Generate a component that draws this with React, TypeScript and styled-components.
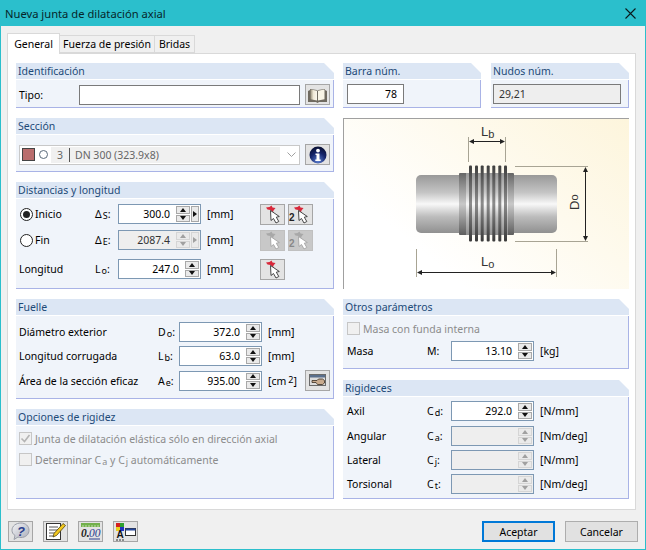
import React from "react";
import styled, { createGlobalStyle } from "styled-components";

const GlobalStyle = createGlobalStyle`
  html, body { margin: 0; padding: 0; background: #f0f0f0; }
  body { font-family: "Noto Sans", "Liberation Sans", sans-serif; font-size: 10.5px; color: #000; }
`;

//layout
const Dialog = styled.div`
  width: 646px;
  height: 550px;
  box-sizing: border-box;
  border: 1px solid #2bbfcc;
  border-top: none;
  background: #f0f0f0;
  overflow: hidden;
`;
const TitleBar = styled.div`
  height: 26px;
  margin: 0 -1px;
  padding: 0 10px 0 5px;
  display: flex;
  align-items: center;
  justify-content: space-between;
  background: #2bbfcc;
  font-size: 11.2px;
  color: #06262a;
`;
const Tabs = styled.div`
  display: flex;
  align-items: flex-end;
  height: 20px;
  padding: 7px 0 0 6px;
  position: relative;
  z-index: 1;
`;
const Tab = styled.div<{ $active?: boolean; $w: number }>`
  box-sizing: border-box;
  width: ${({ $w }) => $w}px;
  height: ${({ $active }) => ($active ? "21px" : "18px")};
  margin-bottom: ${({ $active }) => ($active ? "-1px" : "0")};
  margin-left: ${({ $active }) => ($active ? "0" : "-1px")};
  display: flex;
  align-items: center;
  justify-content: center;
  background: ${({ $active }) => ($active ? "#fff" : "#f0f0f0")};
  border: 1px solid #d9d9d9;
  border-bottom: ${({ $active }) => ($active ? "none" : "1px solid #d9d9d9")};
`;
const Panel = styled.div`
  box-sizing: border-box;
  height: 457px;
  margin: 0 9px 0 6px;
  padding: 9px 6px 0 8px;
  background: #fff;
  border: 1px solid #d9d9d9;
  display: grid;
  grid-template-columns: 318px 286px;
  column-gap: 9px;
`;
const Column = styled.div`
  display: flex;
  flex-direction: column;
  gap: 10px;
`;
const TwoGroups = styled.div`
  display: grid;
  grid-template-columns: 138px 138px;
  gap: 10px;
`;
const Footer = styled.div`
  display: flex;
  align-items: flex-start;
  padding: 11px 7px 0 7px;
`;
const IconGroup = styled.div`
  display: flex;
  gap: 10px;
  flex: 1;
`;
const ActionGroup = styled.div`
  display: flex;
  gap: 10px;
`;

//groups
const Group = styled.section<{ $h: number; $mt?: number }>`
  height: ${({ $h }) => $h}px;
  margin-top: ${({ $mt }) => $mt ?? 0}px;
  display: flex;
  flex-direction: column;
  box-sizing: border-box;
`;
const GroupTitle = styled.div`
  height: 16px;
  flex: none;
  padding-left: 2px;
  line-height: 16px;
  background: #dce6f4;
  color: #1c4a78;
  clip-path: polygon(0 0, calc(100% - 10px) 0, 100% 10px, 100% 100%, 0 100%);
  border-bottom: 1px solid #fff;
`;
const GroupBody = styled.div<{ $pt?: number; $pl?: number }>`
  flex: 1;
  min-height: 0;
  padding: ${({ $pt }) => $pt ?? 4}px 0 0 ${({ $pl }) => $pl ?? 3}px;
  background: #f0f4fa;
  border-right: 1px solid #a9b3e6;
  border-bottom: 1px solid #a9b3e6;
`;
const Row = styled.div<{ $cols: string; $mt?: number }>`
  display: grid;
  grid-template-columns: ${({ $cols }) => $cols};
  align-items: center;
  height: 20px;
  margin-top: ${({ $mt }) => $mt ?? 0}px;
`;
const Symbol = styled.span`
  white-space: nowrap;
`;
const Sub = styled.span`
  font-size: 9px;
  position: relative;
  top: 1px;
  margin-left: 1px;
`;
const Unit = styled.span`
  padding-left: 6px;
  white-space: nowrap;
`;
const Sup = styled.span`
  font-size: 9px;
  position: relative;
  top: -2px;
  margin-left: 2px;
`;

//inputs
const Field = styled.div<{ $disabled?: boolean; $plain?: boolean }>`
  box-sizing: border-box;
  height: 20px;
  display: flex;
  align-items: center;
  justify-content: flex-end;
  padding: 1px;
  border: 1px solid ${({ $plain }) => ($plain ? "#7a7a7a" : "#7d98b3")};
  background: ${({ $disabled }) => ($disabled ? "#eeeeee" : "#fff")};
  color: ${({ $disabled }) => ($disabled ? "#333" : "#000")};
`;
const FieldValue = styled.span<{ $left?: boolean; $pr?: number }>`
  flex: 1;
  padding: ${({ $left, $pr }) => ($left ? "0 0 0 4px" : `0 ${$pr ?? 5}px 0 0`)};
  text-align: ${({ $left }) => ($left ? "left" : "right")};
`;
const Spin = styled.div`
  width: 14px;
  height: 16px;
  margin-left: 1px;
  display: flex;
  flex-direction: column;
  gap: 1px;
`;
const SpinButton = styled.div<{ $dir: "up" | "down"; $off?: boolean }>`
  flex: 1;
  display: flex;
  align-items: center;
  justify-content: center;
  background: #eaeaea;
  border: 1px solid ${({ $off }) => ($off ? "#d5d5d5" : "#a8a8a8")};
  &::after {
    content: "";
    border-left: 3px solid transparent;
    border-right: 3px solid transparent;
    ${({ $dir, $off }) =>
      $dir === "up"
        ? `border-bottom: 4px solid ${$off ? "#a0a0a0" : "#111"};`
        : `border-top: 4px solid ${$off ? "#a0a0a0" : "#111"};`}
  }
`;
const StepButton = styled.div<{ $off?: boolean }>`
  width: 8px;
  height: 16px;
  margin-left: 1px;
  display: flex;
  align-items: center;
  justify-content: center;
  background: #eaeaea;
  border: 1px solid ${({ $off }) => ($off ? "#d5d5d5" : "#a8a8a8")};
  box-sizing: border-box;
  &::after {
    content: "";
    border-top: 3px solid transparent;
    border-bottom: 3px solid transparent;
    border-left: 4px solid ${({ $off }) => ($off ? "#a0a0a0" : "#111")};
  }
`;
const IconButton = styled.div<{ $off?: boolean }>`
  box-sizing: border-box;
  width: 25px;
  height: 21px;
  display: flex;
  align-items: center;
  justify-content: center;
  background: ${({ $off }) => ($off ? "#c8c8c8" : "#e3e3e3")};
  border: 1px solid ${({ $off }) => ($off ? "#c0c0c0" : "#a6a6a6")};
`;
const PickGroup = styled.div`
  display: flex;
  gap: 3px;
  align-self: start;
  margin-top: 1px;
`;
const Combo = styled.div`
  box-sizing: border-box;
  height: 20px;
  display: flex;
  align-items: center;
  padding: 0 0 0 2px;
  background: #fff;
  border: 1px solid #c8c8c8;
`;
const Swatch = styled.span`
  box-sizing: border-box;
  width: 13px;
  height: 13px;
  background: #b96d6d;
  border: 1px solid #444;
`;
const CircleMark = styled.span`
  box-sizing: border-box;
  width: 9px;
  height: 9px;
  margin: 0 3px 0 4px;
  border: 1px solid #5a6a7a;
  border-radius: 50%;
`;
const ComboText = styled.div`
  width: 229px;
  height: 16px;
  display: flex;
  align-items: center;
  background: #f0f0f0;
  color: #666;
`;
const ComboIndex = styled.span`
  width: 18px;
  text-align: center;
  border-right: 1px solid #555;
  margin-right: 5px;
`;
const Chevron = styled.span`
  margin-left: 7px;
  display: flex;
`;
const Radio = styled.span<{ $checked?: boolean }>`
  box-sizing: border-box;
  width: 13px;
  height: 13px;
  margin: 0 2px 0 1px;
  display: inline-flex;
  align-items: center;
  justify-content: center;
  flex: none;
  background: #fff;
  border: 1px solid #222;
  border-radius: 50%;
  &::after {
    content: "";
    display: ${({ $checked }) => ($checked ? "block" : "none")};
    width: 7px;
    height: 7px;
    border-radius: 50%;
    background: #222;
  }
`;
const RadioLabel = styled.label`
  display: flex;
  align-items: center;
`;
const CheckRow = styled.div<{ $mt?: number }>`
  display: flex;
  align-items: center;
  gap: 3px;
  height: 13px;
  margin-top: ${({ $mt }) => $mt ?? 0}px;
  color: #8c8c8c;
`;
const CheckBox = styled.span`
  box-sizing: border-box;
  width: 13px;
  height: 13px;
  flex: none;
  display: flex;
  background: #f0f0f0;
  border: 1px solid #c6c6c6;
`;
const Illustration = styled.div`
  height: 171px;
  box-sizing: border-box;
  border-top: 1px solid #a0a0a0;
  border-left: 1px solid #a0a0a0;
  background: linear-gradient(40deg, #ffffff 25%, #fdf5dc 100%);
`;
const DialogButton = styled.button<{ $primary?: boolean }>`
  box-sizing: border-box;
  width: 73px;
  height: 21px;
  padding: 0;
  font: inherit;
  color: #000;
  background: #e1e1e1;
  border: ${({ $primary }) => ($primary ? "2px solid #0078d7" : "1px solid #adadad")};
`;

//icons
const PickIcon = ({ two, off }: { two?: boolean; off?: boolean }) => (
  <svg width="23" height="19" viewBox="0 0 23 19">
    {two && (
      <text x="0" y="16" fontSize="10" fontWeight="700" fontFamily="Liberation Sans" fill={off ? "#888" : "#222"}>
        2
      </text>
    )}
    <path d="M5 2.500l3.500-.5 2-1.500 1 2 3 .5-2 2.500-.5 2-2.500-2.500-3-.5z" fill={off ? "#a8a8a8" : "#d8283a"} />
    <path d="M9.500 5.500l.5 10 2.500-2 2.500 4.500 2.800-1.500-2.500-4.300 3-.7z" fill="#fff" stroke={off ? "#a4a4a4" : "#333"} strokeWidth=".9" strokeLinejoin="round" />
  </svg>
);
const BookIcon = () => (
  <svg width="21" height="16" viewBox="0 0 21 16">
    <defs>
      <linearGradient id="page" x1="0" y1="0" x2="1" y2="0">
        <stop offset="0" stopColor="#9a917c" />
        <stop offset=".45" stopColor="#efe8d6" />
        <stop offset="1" stopColor="#fbf8ee" />
      </linearGradient>
    </defs>
    <path d="M1 4l2-1v-1l7 1 .5 1 .5-1 7-1v1l2 1v11h-8l-1.500 1-1.500-1h-8z" fill="#6f6a60" />
    <path d="M3.500 2.500l6.500 1.200v9.800l-6.500-1.200z" fill="url(#page)" />
    <path d="M17.500 2.500l-6.500 1.200v9.800l6.500-1.200z" fill="#f8f4e6" />
  </svg>
);
const InfoIcon = () => (
  <svg width="18" height="18" viewBox="0 0 18 18">
    <defs>
      <radialGradient id="infoBall" cx=".5" cy=".85" r=".8">
        <stop offset="0" stopColor="#5b7fd0" />
        <stop offset=".6" stopColor="#14246a" />
        <stop offset="1" stopColor="#0a1238" />
      </radialGradient>
    </defs>
    <circle cx="9" cy="9" r="8.500" fill="url(#infoBall)" />
    <circle cx="9" cy="4.600" r="1.900" fill="#fff" />
    <path d="M6.500 7.500h4v6h1.200v1.500h-5.400v-1.500h1.200v-4.500h-1z" fill="#fff" />
  </svg>
);
const HandIcon = () => (
  <svg width="19" height="15" viewBox="0 0 19 15">
    <rect x="1.500" y="1.500" width="16" height="11" fill="#dcdcdc" stroke="#6a6a6a" />
    <rect x="2" y="2" width="15" height="2.500" fill="#5a6f8c" />
    <path d="M4 7.500h5l1.500-1.500h4l2 1.500v2.500l-2 1.500h-5l-1.500-2h-4z" fill="#c9ab8e" stroke="#3a2e22" strokeWidth=".8" />
  </svg>
);
const HelpIcon = () => (
  <svg width="21" height="19" viewBox="0 0 21 19">
    <defs>
      <linearGradient id="bubble" x1="0" y1="0" x2="1" y2="1">
        <stop offset="0" stopColor="#f4f4f6" />
        <stop offset="1" stopColor="#a9adba" />
      </linearGradient>
    </defs>
    <path d="M11 1c4.500 0 8 3 8 7.300s-3.500 7.200-8 7.200c-1 0-2-.2-3-.5l-4 2.500 1-4c-2-1.300-3-3-3-5.200 0-4.300 4-7.300 9-7.300z" fill="url(#bubble)" stroke="#9a9ea8" />
    <text x="11" y="13.500" textAnchor="middle" fontSize="13" fontWeight="700" fontStyle="italic" fontFamily="Liberation Sans" fill="#2c3f8e">?</text>
  </svg>
);
const NoteIcon = () => (
  <svg width="21" height="19" viewBox="0 0 21 19">
    <rect x="1.500" y="1.500" width="14" height="16" fill="#fff" stroke="#333" />
    <path d="M4 5h9M4 8h9M4 11h6M4 14h5" stroke="#555" />
    <path d="M18 1.500l2.500 2-9 10-3.500 1.500 1-3.500z" fill="#f2c81e" stroke="#4d4010" strokeWidth=".8" />
  </svg>
);
const UnitsIcon = () => (
  <svg width="21" height="19" viewBox="0 0 21 19">
    <rect x="1" y="1" width="19" height="4" fill="#72b04c" />
    <path d="M3 3v2M6 3v2M9 3v2M12 3v2M15 3v2M18 3v2" stroke="#d8ecc8" strokeWidth=".8" />
    <text x="1" y="15" fontSize="11.500" fontWeight="700" fontStyle="italic" fontFamily="Liberation Serif" fill="#222">0.</text>
    <text x="9" y="15" fontSize="11.500" fontStyle="italic" fontFamily="Liberation Serif" fill="#2c3f8e">00</text>
    <path d="M9 17h11" stroke="#2c3f8e" />
  </svg>
);
const ColorIcon = () => (
  <svg width="23" height="19" viewBox="0 0 23 19">
    <rect x="2" y="1" width="4" height="4" fill="#d32020" />
    <rect x="6" y="1" width="4" height="4" fill="#2ea02e" />
    <rect x="2" y="5" width="4" height="4" fill="#e8d020" />
    <rect x="6" y="5" width="4" height="4" fill="#2030c0" />
    <text x="6" y="16" textAnchor="middle" fontSize="10" fontWeight="700" fontFamily="Liberation Sans" fill="#111">A</text>
    <path d="M2 18h2M5 18h2M8 18h2" stroke="#333" />
    <rect x="11.500" y="6.500" width="10" height="7" fill="#fff" stroke="#333" />
    <rect x="11.500" y="6.500" width="10" height="2" fill="#24469a" />
  </svg>
);
const CheckMark = () => (
  <svg width="11" height="11" viewBox="0 0 11 11">
    <path d="M1.500 5.500l3 3 5-6.500" fill="none" stroke="#b4b4b4" strokeWidth="1.600" />
  </svg>
);

const SpinBox = ({ off }: { off?: boolean }) => (
  <Spin>
    <SpinButton $dir="up" $off={off} />
    <SpinButton $dir="down" $off={off} />
  </Spin>
);

const fins = [126, 132, 137.7, 143.7, 149.3, 155.3, 161];

const BellowsDrawing = () => (
  <svg width="285" height="170" viewBox="1 1 285 170">
    <defs>
      <linearGradient id="tube" x1="0" y1="0" x2="0" y2="1">
        <stop offset="0" stopColor="#999" />
        <stop offset=".3" stopColor="#c4c4c4" />
        <stop offset=".5" stopColor="#f8f8f8" />
        <stop offset=".72" stopColor="#bcbcbc" />
        <stop offset="1" stopColor="#909090" />
      </linearGradient>
      <linearGradient id="collar" x1="0" y1="0" x2="0" y2="1">
        <stop offset="0" stopColor="#666" />
        <stop offset=".5" stopColor="#c8c8c8" />
        <stop offset="1" stopColor="#5e5e5e" />
      </linearGradient>
      <linearGradient id="fin" x1="0" y1="0" x2="0" y2="1">
        <stop offset="0" stopColor="#3e3e3e" />
        <stop offset=".5" stopColor="#8c8c8c" />
        <stop offset="1" stopColor="#3a3a3a" />
      </linearGradient>
    </defs>
    <rect x="73" y="57" width="141" height="58" rx="5" fill="url(#tube)" />
    <rect x="116" y="55" width="55" height="62" rx="1" fill="url(#collar)" />
    <rect x="123" y="55" width="42" height="62" fill="url(#tube)" />
    {fins.map((x) => (
      <rect key={x} x={x} y="47.500" width="3" height="76" rx="1" fill="url(#fin)" />
    ))}
    <g stroke="#a8a494" strokeWidth="1" fill="none">
      <path d="M125.500 19v25M162.500 19v25" />
      <path d="M172 48.500h73M172 123.500h73" />
      <path d="M73.500 131v28M213.500 131v28" />
    </g>
    <g stroke="#222" strokeWidth="1" fill="none">
      <path d="M127 23.500h34M242.500 50v72M75 154.500h137" />
    </g>
    <g fill="#222">
      <path d="M126 23.500l5-2.500v5zM162 23.500l-5-2.500v5z" />
      <path d="M242.500 49l-2.500 5h5zM242.500 123l-2.500-5h5z" />
      <path d="M74 154.500l5-2.500v5zM213 154.500l-5-2.500v5z" />
    </g>
    <g fontFamily="Liberation Sans" fill="#333" fontSize="13">
      <text x="138" y="18">L<tspan fontSize="11" dy="2">b</tspan></text>
      <text x="138" y="148">L<tspan fontSize="11" dy="2">o</tspan></text>
      <text transform="translate(236 92) rotate(-90)">D<tspan fontSize="11" dy="-1">o</tspan></text>
    </g>
  </svg>
);

const distCols = "76px 23px 83px 59px auto";
const fuelleCols = "139px 21px 83px 43px 25px";
const sideCols = "80px 24px 83px auto";

const App: React.FC = () => {
  return (
    <Dialog>
      <GlobalStyle />
      <TitleBar>
        <span>Nueva junta de dilatación axial</span>
        <svg width="11" height="11" viewBox="0 0 11 11">
          <path d="M.5.5l10 10M10.500.5l-10 10" stroke="#0a1a1c" strokeWidth="1.100" />
        </svg>
      </TitleBar>
      <Tabs>
        <Tab $active $w={53}>General</Tab>
        <Tab $w={96}>Fuerza de presión</Tab>
        <Tab $w={41}>Bridas</Tab>
      </Tabs>
      <Panel>
        <Column>
          <Group $h={45}>
            <GroupTitle>Identificación</GroupTitle>
            <GroupBody>
              <Row $cols="60px 221px 5px 25px">
                <span>Tipo:</span>
                <Field $plain />
                <span />
                <IconButton><BookIcon /></IconButton>
              </Row>
            </GroupBody>
          </Group>
          <Group $h={54}>
            <GroupTitle>Sección</GroupTitle>
            <GroupBody $pt={9}>
              <Row $cols="281px 5px 25px">
                <Combo>
                  <Swatch />
                  <CircleMark />
                  <ComboText>
                    <ComboIndex>3</ComboIndex>
                    DN 300 (323.9x8)
                  </ComboText>
                  <Chevron>
                    <svg width="9" height="5" viewBox="0 0 9 5">
                      <path d="M.5.5l4 4 4-4" fill="none" stroke="#a0a0a0" />
                    </svg>
                  </Chevron>
                </Combo>
                <span />
                <IconButton><InfoIcon /></IconButton>
              </Row>
            </GroupBody>
          </Group>
          <Group $h={107}>
            <GroupTitle>Distancias y longitud</GroupTitle>
            <GroupBody>
              <Row $cols={distCols}>
                <RadioLabel><Radio $checked />Inicio</RadioLabel>
                <Symbol>Δ<Sub>S</Sub>:</Symbol>
                <Field>
                  <FieldValue>300.0</FieldValue>
                  <SpinBox />
                  <StepButton />
                </Field>
                <Unit>[mm]</Unit>
                <PickGroup>
                  <IconButton><PickIcon /></IconButton>
                  <IconButton><PickIcon two /></IconButton>
                </PickGroup>
              </Row>
              <Row $cols={distCols} $mt={6}>
                <RadioLabel><Radio />Fin</RadioLabel>
                <Symbol>Δ<Sub>E</Sub>:</Symbol>
                <Field $disabled>
                  <FieldValue>2087.4</FieldValue>
                  <SpinBox off />
                  <StepButton $off />
                </Field>
                <Unit>[mm]</Unit>
                <PickGroup>
                  <IconButton $off><PickIcon off /></IconButton>
                  <IconButton $off><PickIcon two off /></IconButton>
                </PickGroup>
              </Row>
              <Row $cols={distCols} $mt={9}>
                <span>Longitud</span>
                <Symbol>L<Sub>o</Sub>:</Symbol>
                <Field>
                  <FieldValue>247.0</FieldValue>
                  <SpinBox />
                </Field>
                <Unit>[mm]</Unit>
                <PickGroup>
                  <IconButton><PickIcon /></IconButton>
                </PickGroup>
              </Row>
            </GroupBody>
          </Group>
          <Group $h={100}>
            <GroupTitle>Fuelle</GroupTitle>
            <GroupBody $pt={6}>
              <Row $cols={fuelleCols}>
                <span>Diámetro exterior</span>
                <Symbol>D<Sub>o</Sub>:</Symbol>
                <Field><FieldValue>372.0</FieldValue><SpinBox /></Field>
                <Unit>[mm]</Unit>
              </Row>
              <Row $cols={fuelleCols} $mt={4}>
                <span>Longitud corrugada</span>
                <Symbol>L<Sub>b</Sub>:</Symbol>
                <Field><FieldValue>63.0</FieldValue><SpinBox /></Field>
                <Unit>[mm]</Unit>
              </Row>
              <Row $cols={fuelleCols} $mt={4}>
                <span>Área de la sección eficaz</span>
                <Symbol>A<Sub>e</Sub>:</Symbol>
                <Field><FieldValue>935.00</FieldValue><SpinBox /></Field>
                <Unit>[cm<Sup>2</Sup>]</Unit>
                <IconButton><HandIcon /></IconButton>
              </Row>
            </GroupBody>
          </Group>
          <Group $h={90}>
            <GroupTitle>Opciones de rigidez</GroupTitle>
            <GroupBody $pt={6}>
              <CheckRow>
                <CheckBox><CheckMark /></CheckBox>
                Junta de dilatación elástica sólo en dirección axial
              </CheckRow>
              <CheckRow $mt={8}>
                <CheckBox />
                <span>Determinar C<Sub>a</Sub> y C<Sub>j</Sub> automáticamente</span>
              </CheckRow>
            </GroupBody>
          </Group>
        </Column>
        <Column>
          <TwoGroups>
            <Group $h={45}>
              <GroupTitle>Barra núm.</GroupTitle>
              <GroupBody $pl={4}>
                <Row $cols="57px">
                  <Field $plain><FieldValue $pr={5}>78</FieldValue></Field>
                </Row>
              </GroupBody>
            </Group>
            <Group $h={45}>
              <GroupTitle>Nudos núm.</GroupTitle>
              <GroupBody $pl={2}>
                <Row $cols="128px">
                  <Field $plain $disabled><FieldValue $left>29,21</FieldValue></Field>
                </Row>
              </GroupBody>
            </Group>
          </TwoGroups>
          <Illustration><BellowsDrawing /></Illustration>
          <Group $h={70}>
            <GroupTitle>Otros parámetros</GroupTitle>
            <GroupBody $pt={6} $pl={4}>
              <CheckRow>
                <CheckBox />
                Masa con funda interna
              </CheckRow>
              <Row $cols={sideCols} $mt={6}>
                <span>Masa</span>
                <Symbol>M:</Symbol>
                <Field><FieldValue>13.10</FieldValue><SpinBox /></Field>
                <Unit>[kg]</Unit>
              </Row>
            </GroupBody>
          </Group>
          <Group $h={119} $mt={1}>
            <GroupTitle>Rigideces</GroupTitle>
            <GroupBody $pl={4}>
              <Row $cols={sideCols}>
                <span>Axil</span>
                <Symbol>C<Sub>d</Sub>:</Symbol>
                <Field><FieldValue>292.0</FieldValue><SpinBox /></Field>
                <Unit>[N/mm]</Unit>
              </Row>
              <Row $cols={sideCols} $mt={5}>
                <span>Angular</span>
                <Symbol>C<Sub>a</Sub>:</Symbol>
                <Field $disabled><FieldValue /><SpinBox off /></Field>
                <Unit>[Nm/deg]</Unit>
              </Row>
              <Row $cols={sideCols} $mt={4}>
                <span>Lateral</span>
                <Symbol>C<Sub>j</Sub>:</Symbol>
                <Field $disabled><FieldValue /><SpinBox off /></Field>
                <Unit>[N/mm]</Unit>
              </Row>
              <Row $cols={sideCols} $mt={4}>
                <span>Torsional</span>
                <Symbol>C<Sub>t</Sub>:</Symbol>
                <Field $disabled><FieldValue /><SpinBox off /></Field>
                <Unit>[Nm/deg]</Unit>
              </Row>
            </GroupBody>
          </Group>
        </Column>
      </Panel>
      <Footer>
        <IconGroup>
          <IconButton><HelpIcon /></IconButton>
          <IconButton><NoteIcon /></IconButton>
          <IconButton><UnitsIcon /></IconButton>
          <IconButton><ColorIcon /></IconButton>
        </IconGroup>
        <ActionGroup>
          <DialogButton $primary>Aceptar</DialogButton>
          <DialogButton>Cancelar</DialogButton>
        </ActionGroup>
      </Footer>
    </Dialog>
  );
};

export default App;
